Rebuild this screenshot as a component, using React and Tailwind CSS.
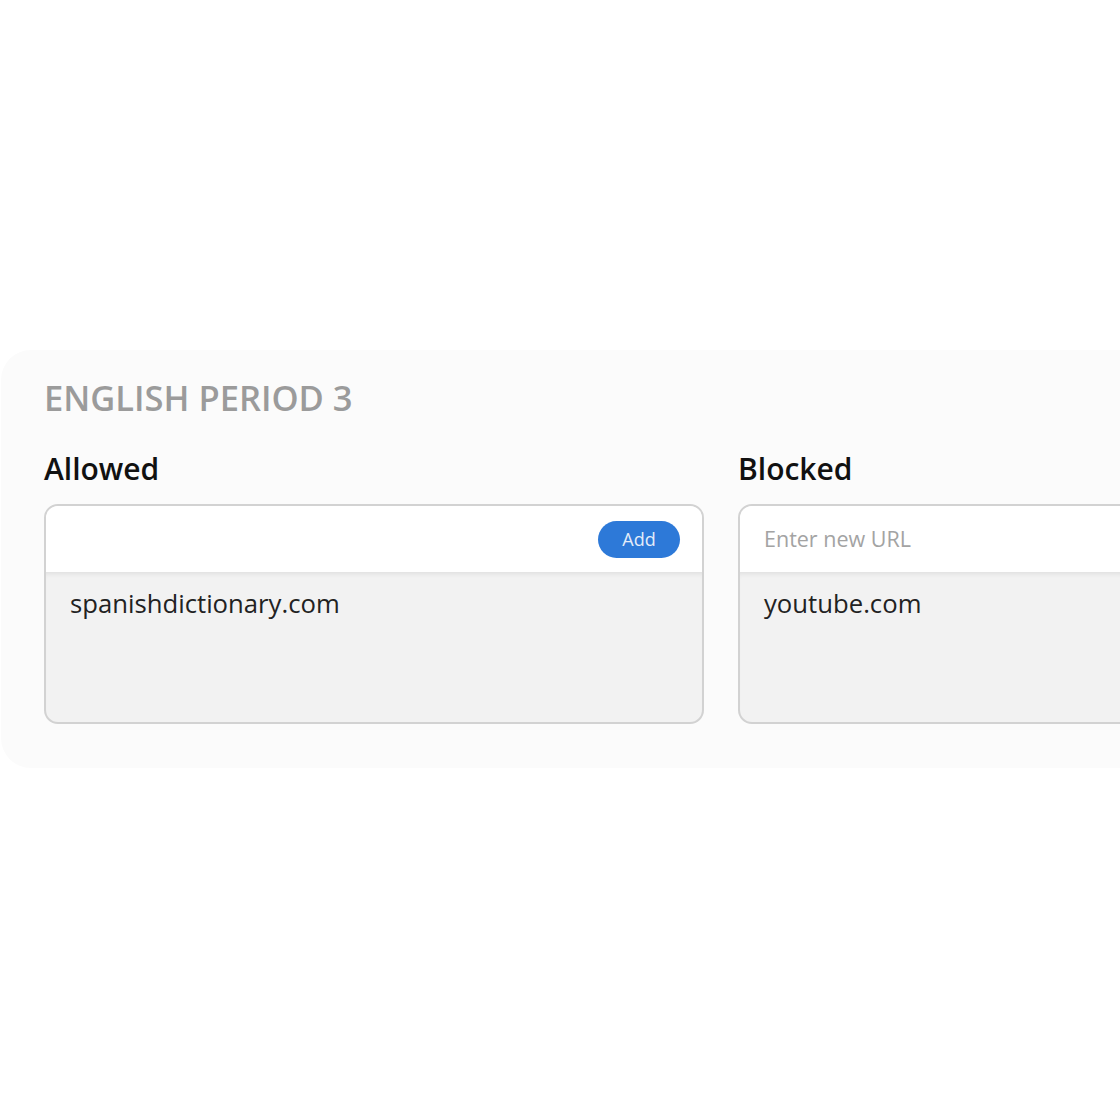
import { useState } from 'react';

function UrlBox({ entries, showAdd }) {
  const [value, setValue] = useState('');
  return (
    <div className="w-[660px] h-[220px] shrink-0 rounded-[14px] border-2 border-[#d2d2d2] overflow-hidden flex flex-col bg-[#f2f2f2]">
      <div className="h-[66px] bg-white flex items-center pl-[24px] pr-[22px] shrink-0">
        <input
          value={value}
          onChange={(e) => setValue(e.target.value)}
          placeholder={showAdd ? '' : 'Enter new URL'}
          className="flex-1 bg-transparent outline-none text-[21.5px] text-[#333] placeholder:text-[#a3a3a3]"
        />
        {showAdd && (
          <button className="w-[82px] h-[37px] rounded-full bg-[#2d79d8] text-[#e3ecf9] text-[18px] leading-none">
            Add
          </button>
        )}
      </div>
      <div className="flex-1 shadow-[inset_0_5px_5px_-3px_rgba(0,0,0,0.08)] px-[24px] pt-[14px]">
        {entries.map((e) => (
          <div key={e} className="text-[25.7px] leading-[36px] text-[#222]">{e}</div>
        ))}
      </div>
    </div>
  );
}

export default function App() {
  return (
    <div className="w-[1120px] h-[1120px] overflow-hidden bg-white" style={{ fontFamily: '"Open Sans", "Noto Sans", sans-serif' }}>
      <div className="mt-[350px] ml-[1px] w-[1600px] h-[418px] rounded-[30px] bg-[#fbfbfb] pl-[43px] pt-[26px]">
        <h1 className="text-[34.5px] leading-[44px] font-semibold text-[#9b9b9b]">ENGLISH PERIOD 3</h1>
        <div className="flex gap-[34px] mt-[30px]">
          <div>
            <h2 className="text-[30px] leading-[38px] font-semibold text-[#111] mb-[16px]">Allowed</h2>
            <UrlBox entries={['spanishdictionary.com']} showAdd />
          </div>
          <div>
            <h2 className="text-[30px] leading-[38px] font-semibold text-[#111] mb-[16px]">Blocked</h2>
            <UrlBox entries={['youtube.com']} />
          </div>
        </div>
      </div>
    </div>
  );
}
